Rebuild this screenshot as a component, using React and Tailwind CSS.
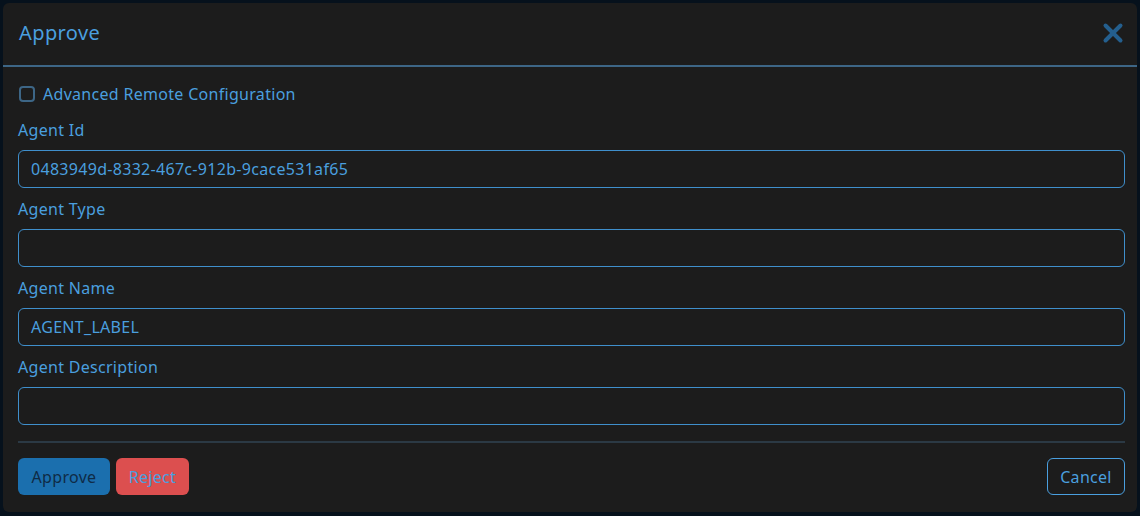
import { X } from "lucide-react";

const campos = [
  { label: "Agent Id", valor: "0483949d-8332-467c-912b-9cace531af65" },
  { label: "Agent Type", valor: "" },
  { label: "Agent Name", valor: "AGENT_LABEL" },
  { label: "Agent Description", valor: "" },
];

export default function App() {
  return (
    <div
      className="w-[1140px] h-[516px] bg-[#06111c] p-[3px] overflow-hidden tracking-[0.3px]"
      style={{ fontFamily: '"Noto Sans", "DejaVu Sans", sans-serif' }}
    >
      {/* Modal */}
      <div className="h-[509px] bg-[#1c1c1c] rounded-md flex flex-col">
        {/* Cabecera */}
        <div className="h-[64px] flex items-center justify-between pl-4 pr-[9px] pb-[2px] border-b-2 border-[#3d6686]">
          <h2 className="text-[20px] text-[#4a9fdf] leading-none tracking-[0.4px]">Approve</h2>
          <button className="text-[#245f8e]">
            <X size={30} strokeWidth={3.2} />
          </button>
        </div>

        {/* Cuerpo */}
        <div className="pl-[15px] pr-[12px] pt-[18px]">
          <label className="flex items-center gap-2 h-[18px]">
            <span className="w-4 h-4 rounded-[4px] border-2 border-[#3d6686] ml-px" />
            <span className="text-[16px] text-[#4a9fdf]">Advanced Remote Configuration</span>
          </label>

          <div className="mt-[6px] flex flex-col">
            {campos.map((c) => (
              <div key={c.label} className="flex flex-col pt-[10px]">
                <span className="text-[16px] text-[#4a9fdf] h-[22px] leading-[22px] mb-[9px]">{c.label}</span>
                <div className="h-[38px] rounded-md border border-[#3f8fcc] flex items-center px-3 text-[16px] text-[#4a9fdf]">
                  {c.valor}
                </div>
              </div>
            ))}
          </div>

          <div className="border-t-2 border-[#2b3944] mt-[16px]" />

          {/* Pie */}
          <div className="flex items-center justify-between pt-[15px]">
            <div className="flex gap-[6px]">
              <button className="h-[37px] w-[92px] rounded-md bg-[#1b6fae] text-[#0f2b46] text-[16px]">
                Approve
              </button>
              <button className="h-[37px] w-[73px] rounded-md bg-[#dc4f4f] text-[#4a9fdf] text-[16px]">
                Reject
              </button>
            </div>
            <button className="h-[37px] w-[78px] rounded-md border border-[#4a9fdf] text-[#4a9fdf] text-[16px]">
              Cancel
            </button>
          </div>
        </div>
      </div>
    </div>
  );
}
